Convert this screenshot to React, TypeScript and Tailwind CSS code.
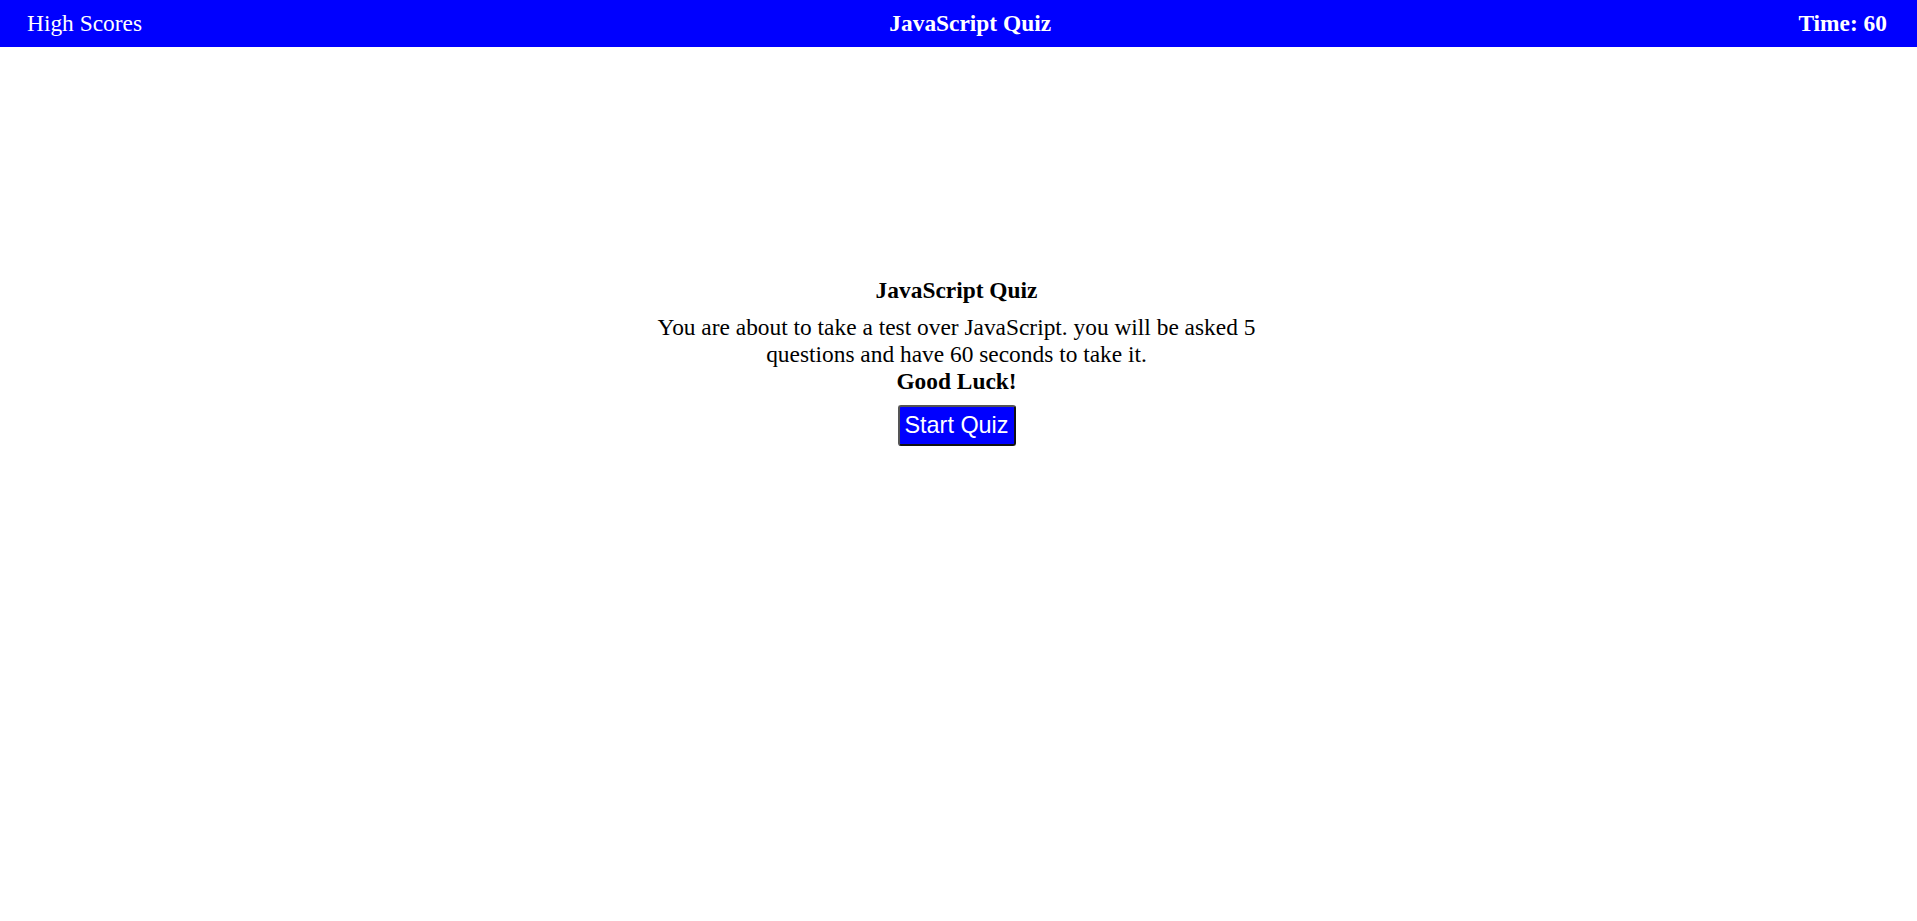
const App = () => {
  return (
    <div className="min-h-screen bg-white font-['Liberation_Serif',serif] text-black">
      <header className="flex h-[47px] items-center justify-between bg-[#0000ff] pl-[27px] pr-[30px] text-[23.4px] leading-[normal] text-white">
        <a className="cursor-pointer">High Scores</a>
        <h1 className="font-bold">JavaScript Quiz</h1>
        <p className="font-bold">Time: 60</p>
      </header>

      <main className="flex justify-center pr-[4px] pt-[230px]">
        <div className="flex w-[640px] flex-col items-center text-center text-[23.4px] leading-[normal]">
          <h2 className="mb-[10px] font-bold">JavaScript Quiz</h2>
          <p>
            You are about to take a test over JavaScript. you will be asked 5
            questions and have 60 seconds to take it.
            <br />
            <strong>Good Luck!</strong>
          </p>
          <button className="mt-[10px] rounded-[3px] border-2 border-solid border-t-[#555] border-l-[#555] border-r-[#111] border-b-[#111] bg-[#0000ff] px-[5px] py-[5px] font-['Liberation_Sans',Arial,sans-serif] text-[23.4px] leading-[normal] text-white">
            Start Quiz
          </button>
        </div>
      </main>
    </div>
  );
};

export default App;
